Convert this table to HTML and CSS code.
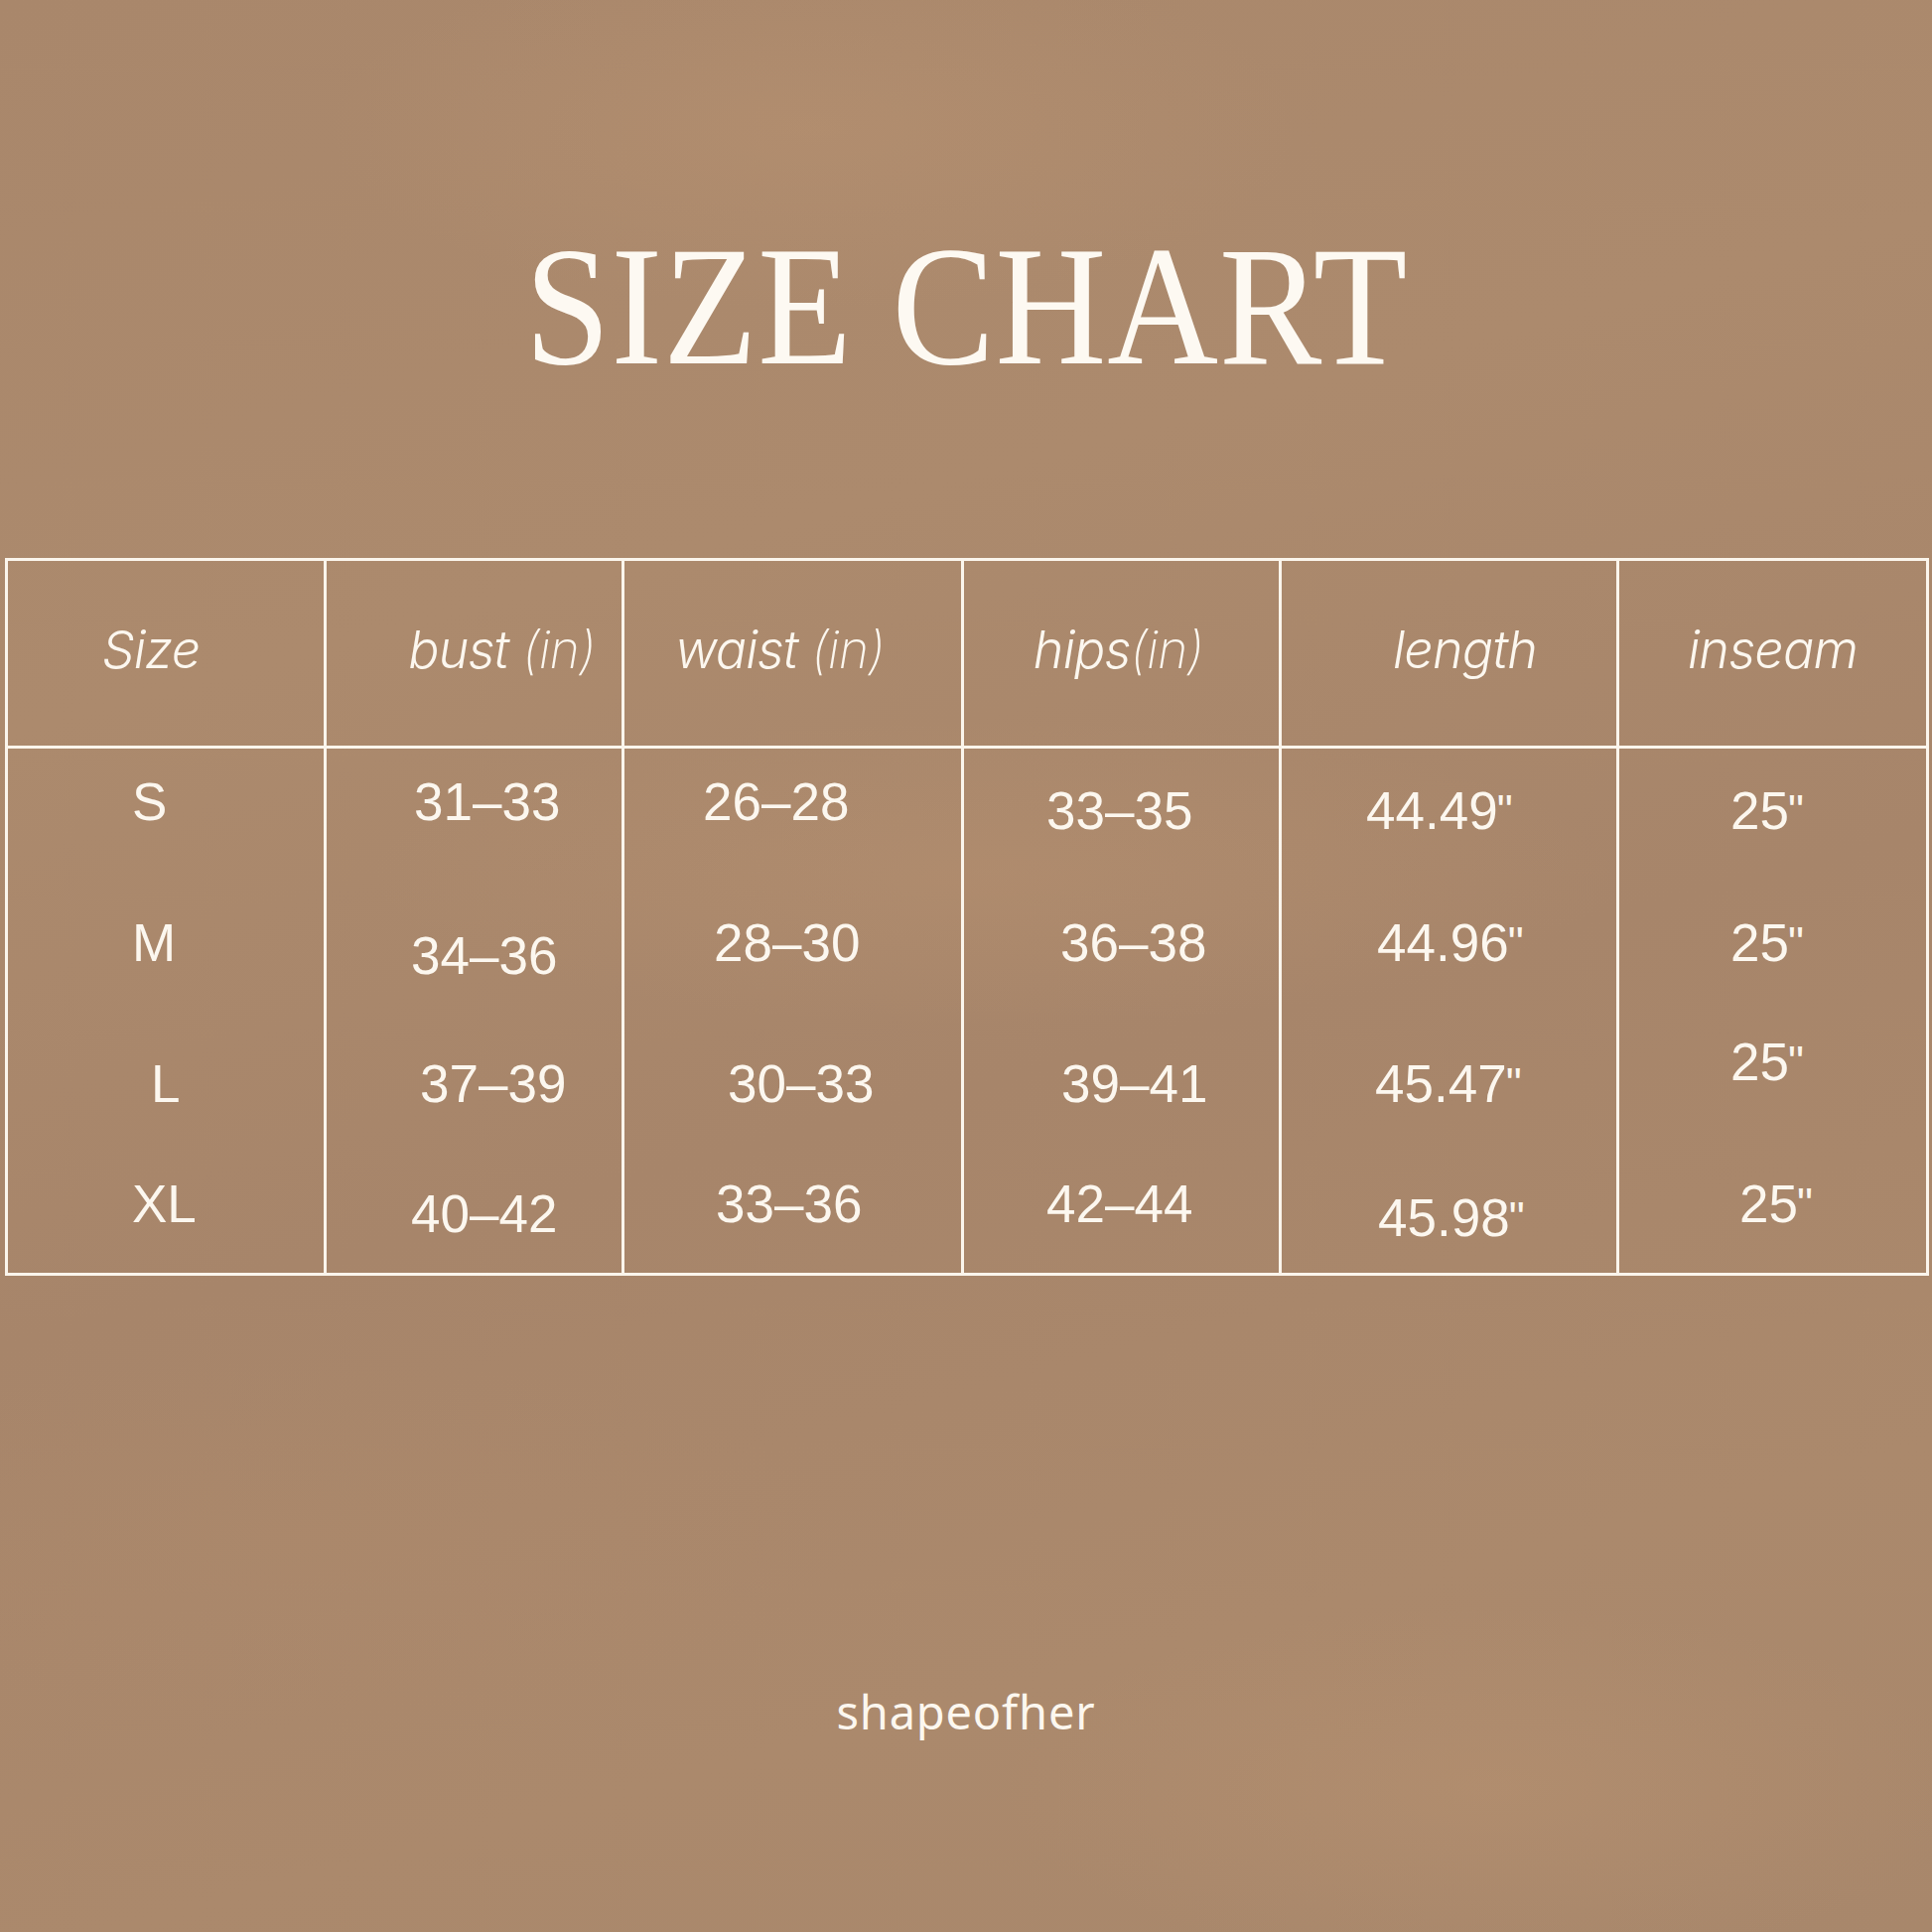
FILE: index.html
```html
<!DOCTYPE html>
<html lang="en">
<head>
<meta charset="utf-8">
<title>Size Chart</title>
<link rel="stylesheet" href="styles.css">
</head>
<body>
<div class="page">
  <h1 class="title"><span class="title-text">SIZE CHART</span></h1>

  <div class="chart">
    <div class="cell head hc1"><span class="ht">Size</span></div>
    <div class="cell head hc2"><span class="ht">bust <span class="thin">(in)</span></span></div>
    <div class="cell head hc3"><span class="ht">waist <span class="thin">(in)</span></span></div>
    <div class="cell head hc4"><span class="ht">hips<span class="thin">(in)</span></span></div>
    <div class="cell head hc5"><span class="ht">length</span></div>
    <div class="cell head hc6"><span class="ht">inseam</span></div>

    <div class="cell body r1 c1"><span class="v">S</span></div>
    <div class="cell body r1 c2"><span class="v sh3">31–33</span></div>
    <div class="cell body r1 c3"><span class="v">26–28</span></div>
    <div class="cell body r1 c4"><span class="v lo9">33–35</span></div>
    <div class="cell body r1 c5"><span class="v lo9">44.49<span class="q">"</span></span></div>
    <div class="cell body r1 c6"><span class="v lo9">25<span class="q">"</span></span></div>

    <div class="cell body r2 c1"><span class="v">M</span></div>
    <div class="cell body r2 c2"><span class="v lo13">34–36</span></div>
    <div class="cell body r2 c3"><span class="v sh11">28–30</span></div>
    <div class="cell body r2 c4"><span class="v sh14">36–38</span></div>
    <div class="cell body r2 c5"><span class="v sh11">44.96<span class="q">"</span></span></div>
    <div class="cell body r2 c6"><span class="v">25<span class="q">"</span></span></div>

    <div class="cell body r3 c1"><span class="v sh19">L</span></div>
    <div class="cell body r3 c2"><span class="v sh9">37–39</span></div>
    <div class="cell body r3 c3"><span class="v sh25">30–33</span></div>
    <div class="cell body r3 c4"><span class="v sh15">39–41</span></div>
    <div class="cell body r3 c5"><span class="v sh9">45.47<span class="q">"</span></span></div>
    <div class="cell body r3 c6"><span class="v up22">25<span class="q">"</span></span></div>

    <div class="cell body r4 c1"><span class="v">XL</span></div>
    <div class="cell body r4 c2"><span class="v lo10">40–42</span></div>
    <div class="cell body r4 c3"><span class="v sh13">33–36</span></div>
    <div class="cell body r4 c4"><span class="v">42–44</span></div>
    <div class="cell body r4 c5"><span class="v sh12 lo14">45.98<span class="q">"</span></span></div>
    <div class="cell body r4 c6"><span class="v sh9">25<span class="q">"</span></span></div>
  </div>

  <p class="brand">shapeofher</p>
</div>
</body>
</html>
```

FILE: styles.css
```css
html, body {
  margin: 0;
  padding: 0;
}

body {
  width: 1946px;
  height: 1946px;
  overflow: hidden;
  color: #fcf7ef;
  background-color: #a8866a;
  background-image:
    radial-gradient(ellipse 700px 260px at 820px 130px, rgba(190, 150, 115, 0.35), rgba(190, 150, 115, 0) 70%),
    radial-gradient(ellipse 900px 220px at 1000px 880px, rgba(190, 150, 115, 0.30), rgba(190, 150, 115, 0) 70%),
    radial-gradient(ellipse 700px 260px at 1500px 1800px, rgba(190, 150, 115, 0.35), rgba(190, 150, 115, 0) 70%),
    radial-gradient(ellipse 800px 260px at 300px 1550px, rgba(175, 138, 107, 0.30), rgba(175, 138, 107, 0) 70%),
    linear-gradient(165deg, #a9876b 0%, #ac8a6d 30%, #a7856a 55%, #ab896c 80%, #a8876b 100%);
}

.page {
  display: flex;
  flex-direction: column;
  padding-top: 222px;
}

.title {
  margin: 0;
  text-align: center;
  font-family: "Liberation Serif", "Times New Roman", serif;
  font-weight: 400;
  font-size: 172px;
  line-height: 1;
  letter-spacing: 1px;
  color: #fdf9f2;
}

.title-text {
  display: inline-block;
  transform: scaleX(0.9);
  transform-origin: center;
}

.chart {
  margin-top: 168px;
  margin-left: 5px;
  width: max-content;
  display: grid;
  grid-template-columns: 321px 300px 342px 320px 340px 312px;
  grid-template-rows: 189px 125px 142px 131px 130px;
  border-top: 3px solid #fbf5ec;
  border-left: 3px solid #fbf5ec;
  border-bottom: 3px solid #fbf5ec;
}

.cell {
  box-sizing: border-box;
  border-right: 3px solid #fbf5ec;
  display: flex;
}

.head {
  border-bottom: 3px solid #fbf5ec;
  align-items: center;
  justify-content: center;
  padding-bottom: 7px;
  font-family: "Inter", "Lato", sans-serif;
  font-style: italic;
  font-weight: 300;
  font-size: 52px;
  line-height: 1;
  letter-spacing: -0.8px;
}

.ht {
  white-space: nowrap;
}

.head .thin {
  font-weight: 200;
}

.hc1 { padding-right: 30px; }
.hc2 { padding-left: 56px; }
.hc3 { padding-right: 26px; }
.hc4 { padding-right: 6px; }
.hc5 { padding-left: 32px; }

.body {
  align-items: flex-start;
  font-family: "Liberation Sans", Arial, sans-serif;
  font-size: 53px;
  line-height: 52px;
  font-weight: 400;
}

.r1 { padding-top: 28px; }
.r2 { padding-top: 45px; }
.r3 { padding-top: 45px; }
.r4 { padding-top: 35px; }

.c1 { padding-left: 125px; }
.c2 { padding-left: 85px; }
.c3 { padding-left: 79px; }
.c4 { padding-left: 83px; }
.c5 { padding-left: 85px; }
.c6 { padding-left: 112px; }

.v {
  display: block;
  white-space: nowrap;
}

.q {
  margin-left: -1px;
  letter-spacing: 0;
  font-size: 0.85em;
  vertical-align: 3px;
}

.sh3 { margin-left: 3px; }
.sh9 { margin-left: 9px; }
.sh11 { margin-left: 11px; }
.sh12 { margin-left: 12px; }
.sh13 { margin-left: 13px; }
.sh14 { margin-left: 14px; }
.sh15 { margin-left: 15px; }
.sh19 { margin-left: 19px; }
.sh25 { margin-left: 25px; }

.lo9 { margin-top: 9px; }
.lo10 { margin-top: 10px; }
.lo13 { margin-top: 13px; }
.lo14 { margin-top: 14px; }
.up22 { margin-top: -22px; }

.brand {
  margin: 416px 0 0;
  text-align: center;
  font-family: "Noto Sans", "Open Sans", sans-serif;
  font-size: 47px;
  line-height: 1;
  letter-spacing: 0.8px;
  color: #fcf7ef;
}
```
